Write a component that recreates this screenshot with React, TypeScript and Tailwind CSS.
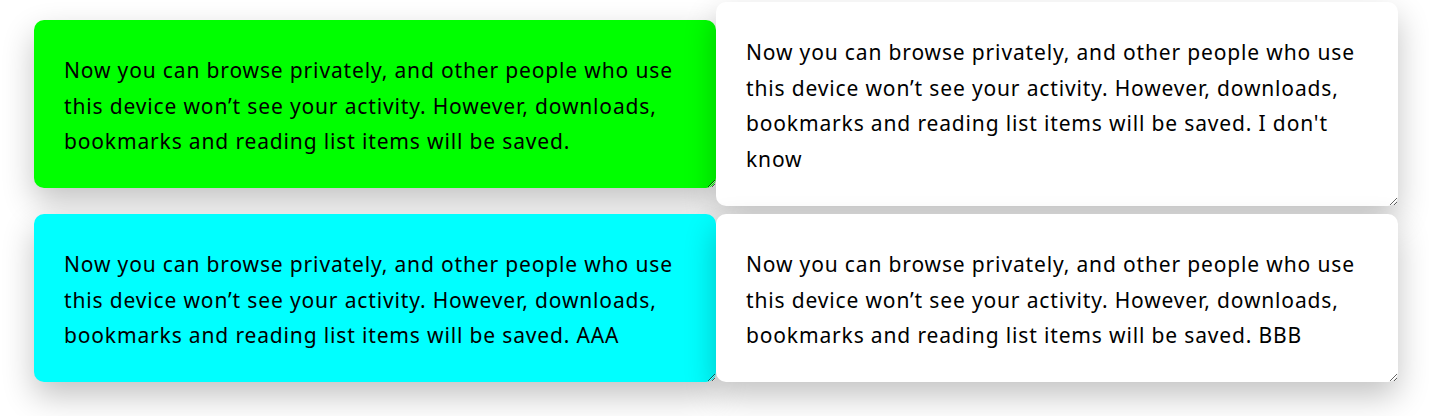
const text =
  "Now you can browse privately, and other people who use this device won’t see your activity. However, downloads, bookmarks and reading list items will be saved.";

const boxes = [
  { value: text, className: "bg-[#00ff00] h-[168px]" },
  { value: text + " I don't know", className: "bg-white h-[204px]" },
  { value: text + " AAA", className: "bg-[#00ffff] h-[168px]" },
  { value: text + " BBB", className: "bg-white h-[168px]" },
];

export default function App() {
  return (
    <div className="min-h-[416px] bg-white pt-[2px] pl-[34px] pr-[31px]">
      <div className="grid grid-cols-2 items-center gap-y-2 w-[1364px]">
        {boxes.map((b, i) => (
          <textarea
            key={i}
            defaultValue={b.value}
            className={
              "block w-full rounded-[10px] border-0 px-[30px] pt-[33px] pb-[27px] text-[21px] tracking-[0.85px] leading-[35.5px] text-black outline-none shadow-[0_14px_32px_rgba(0,0,0,0.24)] font-['Noto_Sans',sans-serif] " +
              b.className
            }
          />
        ))}
      </div>
    </div>
  );
}
